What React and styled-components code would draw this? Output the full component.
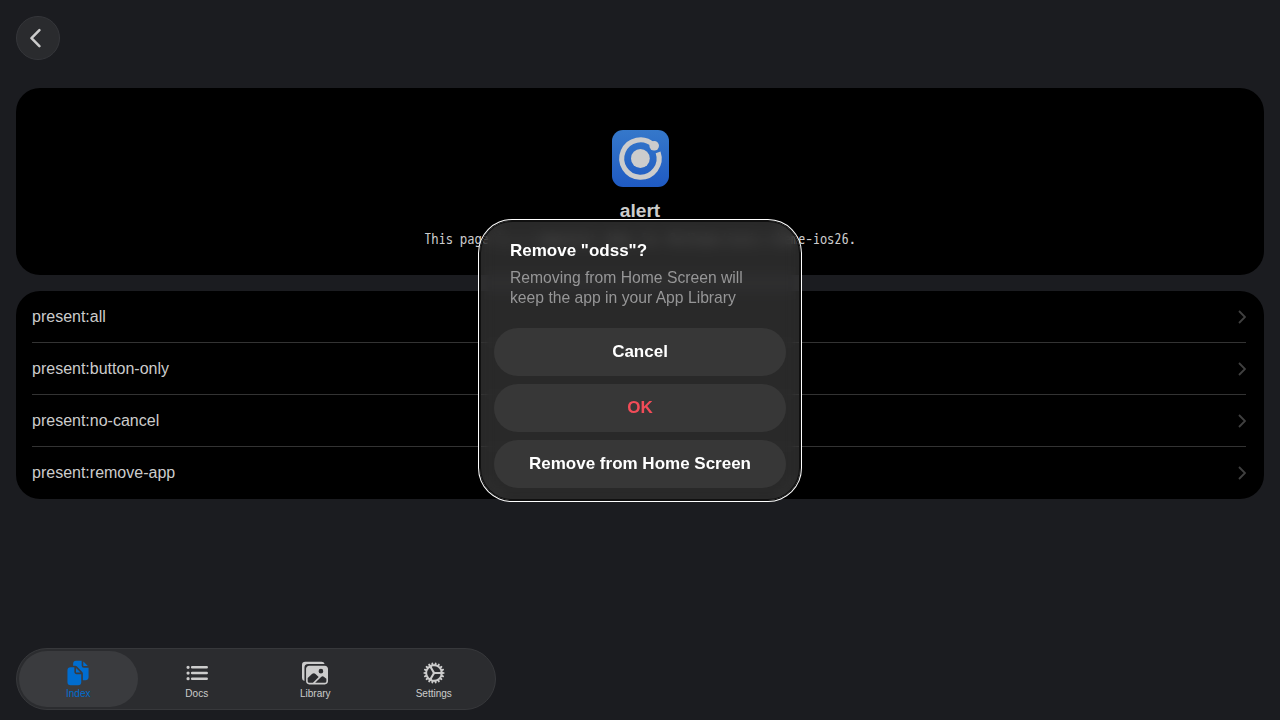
import React from 'react';
import styled, { createGlobalStyle, css } from 'styled-components';
import { IoDocuments, IoList, IoImages, IoCog } from 'react-icons/io5';

const GlobalStyle = createGlobalStyle`
  *, *::before, *::after { box-sizing: border-box; }
  body {
    margin: 0;
    background: #1b1c20;
    font-family: "Liberation Sans", Arial, sans-serif;
    color: #ccc;
    overflow: hidden;
  }
`;

const Page = styled.div`
  position: relative;
  display: flex;
  flex-direction: column;
  height: 720px;
  padding: 16px 16px 10px;
`;

const BackButton = styled.button`
  display: flex;
  align-items: center;
  justify-content: center;
  width: 44px;
  height: 44px;
  margin: 0 0 28px;
  padding: 0 6px 0 0;
  border: 1px solid #35363a;
  border-radius: 50%;
  background: #2a2b2e;
  color: #ccc;
  flex-shrink: 0;
`;

const Card = styled.section`
  flex-shrink: 0;
  border-radius: 24px;
  background: #000;
`;

const Hero = styled(Card)`
  display: flex;
  flex-direction: column;
  align-items: center;
  height: 187px;
  margin-bottom: 16px;
  padding-top: 42px;
`;

const AppIcon = styled.div`
  width: 57px;
  height: 57px;
  border-radius: 11px;
  background: linear-gradient(#3578ca, #1f5ac3);
  color: #ccc;

  svg { display: block; }
`;

const HeroTitle = styled.h1`
  margin: 13px 0 0;
  font-size: 19.2px;
  line-height: 22px;
`;

const HeroText = styled.code`
  margin-top: 6px;
  font-family: "WenQuanYi Zen Hei Mono", "Noto Sans Mono CJK JP", monospace;
  font-size: 14.4px;
  line-height: 22px;
  white-space: nowrap;
`;

const List = styled(Card)`
  padding-left: 16px;
  padding-right: 18px;
`;

const Row = styled.div`
  display: flex;
  align-items: center;
  justify-content: space-between;
  height: 52px;
  font-size: 16px;
  border-bottom: 1px solid #333;

  &:last-child { border-bottom-color: transparent; }
`;

const RowChevron = styled.svg`
  color: #404040;
  margin-top: 1px;
`;

const TabBar = styled.nav`
  display: flex;
  width: 480px;
  height: 62px;
  margin-top: auto;
  padding: 2px;
  border: 1px solid #37383b;
  border-radius: 31px;
  background: #2b2c2f;
  flex-shrink: 0;
`;

const Tab = styled.div`
  display: flex;
  flex: 1;
  flex-direction: column;
  align-items: center;
  height: 56px;
  padding-top: 9px;
  border-radius: 28px;
  font-size: 10px;
  line-height: 12px;

  svg { width: 26px; height: 26px; margin-bottom: 2px; }

  ${({ $active }) => $active && css`
    background: #3a3b3e;
    color: #006dd0;
  `}
`;

const Dialog = styled.div`
  position: absolute;
  left: 480px;
  top: 221px;
  display: flex;
  flex-direction: column;
  width: 320px;
  height: 279px;
  padding: 20px 14px 12px;
  border-radius: 32px;
  background: rgba(54, 54, 54, 0.76);
  box-shadow: inset 0 0 0 1px #101010, 0 0 0 1px #101010, 0 0 0 2px #fff;
  isolation: isolate;

  &::before {
    content: "";
    position: absolute;
    inset: 1px;
    z-index: -1;
    border-radius: 31px;
    backdrop-filter: blur(7px);
    mask-image: linear-gradient(90deg, transparent, #000 8px, #000 calc(100% - 8px), transparent);
  }
`;

const DialogTitle = styled.h2`
  margin: 0 16px;
  color: #fff;
  font-size: 17px;
  line-height: 20px;
`;

const DialogText = styled.p`
  margin: 7px 16px 20px;
  color: #969697;
  font-size: 15.7px;
  line-height: 20px;
`;

const Actions = styled.div`
  display: flex;
  flex-direction: column;
  gap: 8px;
`;

const Action = styled.button`
  height: 48px;
  padding: 0 0 1px;
  border: 0;
  border-radius: 24px;
  background: #373737;
  color: ${({ $danger }) => ($danger ? '#f24c58' : '#fff')};
  font: bold 17px "Liberation Sans", Arial, sans-serif;
`;

const rows = ['present:all', 'present:button-only', 'present:no-cancel', 'present:remove-app'];

const tabs = [
  { label: 'Index', Icon: IoDocuments },
  { label: 'Docs', Icon: IoList },
  { label: 'Library', Icon: IoImages },
  { label: 'Settings', Icon: IoCog },
];

export default function App() {
  return (
    <>
      <GlobalStyle />
      <Page>
        <BackButton aria-label="Back">
          <svg width="12" height="20" viewBox="0 0 12 20" fill="none" stroke="currentColor" strokeWidth="2.5" strokeLinecap="round" strokeLinejoin="round">
            <path d="M10.4 2.2 2.5 10.2l7.9 8" />
          </svg>
        </BackButton>
        <Hero>
          <AppIcon>
            <svg width="57" height="57" viewBox="0 0 57 57">
              <path d="M41.4 15.05A18.7 18.7 0 1 0 46.1 22.4" fill="none" stroke="currentColor" strokeWidth="5.1" />
              <circle cx="28.4" cy="28.5" r="9.4" fill="currentColor" />
              <circle cx="42.2" cy="15.8" r="4.8" fill="currentColor" />
            </svg>
          </AppIcon>
          <HeroTitle>alert</HeroTitle>
          <HeroText>This page is a component demo for @rdlabo/ionic-theme-ios26.</HeroText>
        </Hero>
        <List>
          {rows.map((row) => (
            <Row key={row}>
              {row}
              <RowChevron width="8" height="14" viewBox="0 0 8 14" fill="none" stroke="currentColor" strokeWidth="1.8">
                <path d="m1 1 6 6-6 6" />
              </RowChevron>
            </Row>
          ))}
        </List>
        <TabBar>
          {tabs.map(({ label, Icon }, i) => (
            <Tab key={label} $active={i === 0}>
              <Icon />
              {label}
            </Tab>
          ))}
        </TabBar>
        <Dialog role="alertdialog">
          <DialogTitle>Remove "odss"?</DialogTitle>
          <DialogText>Removing from Home Screen will keep the app in your App Library</DialogText>
          <Actions>
            <Action>Cancel</Action>
            <Action $danger>OK</Action>
            <Action>Remove from Home Screen</Action>
          </Actions>
        </Dialog>
      </Page>
    </>
  );
}
